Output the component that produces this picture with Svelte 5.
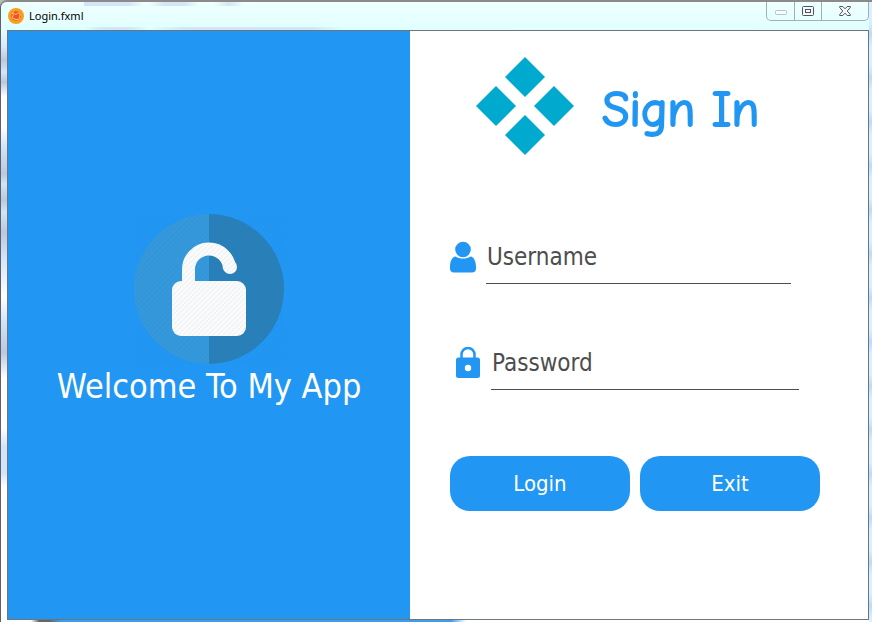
<script>
  let username = $state('');
  let password = $state('');
</script>

<div class="window">
  <header>
    <svg class="app-icon" viewBox="0 0 16 16" width="16" height="16" aria-hidden="true">
      <circle cx="8" cy="8" r="8" fill="#f9a01b" />
      <circle cx="8" cy="8" r="4.800" fill="#f4511e" />
      <path d="M4.500 5C6 4 7 7 8 6.500S10 4 11.500 5.500 11 8 11.500 9.500 9 12 8 11.500 4 11 4.500 9 6 8 4.500 5z" fill="none" stroke="#ffe0b0" stroke-width=".9" />
    </svg>
    <span class="title">Login.fxml</span>
    <div class="ghost" aria-hidden="true"></div>
    <div class="controls">
      <button class="small" aria-label="Minimize" disabled>
        <svg width="12" height="6" viewBox="0 0 12 6"><rect x=".5" y=".5" width="11" height="4" rx="1" fill="#f4ffff" stroke="#b7c3c5" /></svg>
      </button>
      <button class="small" aria-label="Maximize">
        <svg width="12" height="10" viewBox="0 0 12 10"><rect x=".5" y=".5" width="11" height="9" rx="1" fill="#f7f7f7" stroke="#4c5261" /><rect x="3.5" y="3.5" width="5" height="3" fill="#e9ffff" stroke="#4c5261" /></svg>
      </button>
      <button class="close" aria-label="Close">
        <svg width="12" height="10" viewBox="0 0 12 10"><path d="M.7.5h3.1L6 2.8 8.2.5h3.1v1L8.2 5l3.1 3.5v1H8.2L6 7.2 3.8 9.5H.7v-1L3.8 5 .7 1.5z" fill="#f7f7f7" stroke="#4c5261" /></svg>
      </button>
    </div>
  </header>

  <main>
    <section class="welcome">
      <svg class="badge" viewBox="0 0 150 150" width="150" height="150" aria-hidden="true">
        <defs>
          <pattern id="hatch" width="5" height="5" patternUnits="userSpaceOnUse">
            <path d="M-1 6L6-1M-1 1L1-1M4 6L6 4" stroke="#1769ad" stroke-opacity=".07" />
          </pattern>
        </defs>
        <path d="M75 0a75 75 0 0 0 0 150z" fill="#3498db" />
        <path d="M75 0a75 75 0 0 1 0 150z" fill="#2980b9" />
        <path d="M54.500 72V55a20.500 20.500 0 0 1 41-1" fill="none" stroke="#fafafa" stroke-width="13" transform="translate(0 1)" />
        <circle cx="96" cy="53" r="7" fill="#fafafa" />
        <rect x="38" y="67" width="74" height="55" rx="9" fill="#fafafa" />
        <rect x="2" y="2" width="147" height="147" fill="url(#hatch)" />
      </svg>
      <p>Welcome To My App</p>
    </section>

    <section class="signin">
      <div class="brand">
        <svg viewBox="0 0 98 98" width="98" height="98" fill="#00a9ce" aria-hidden="true">
          <path d="M49 0l20 20-20 20-20-20zM20 29l20 20-20 20L0 49zM78 29l20 20-20 20-20-20zM49 58l20 20-20 20-20-20z" />
        </svg>
        <h1>Sign In</h1>
      </div>

      <form onsubmit={(e) => e.preventDefault()}>
        <div class="field">
          <label for="username" aria-label="Username">
            <svg viewBox="0 0 26 32" width="26" height="32" fill="#2196f3" aria-hidden="true">
              <circle cx="13" cy="8.500" r="7.800" />
              <path d="M5.500 15.500C8 17 10 17.500 13 17.500s5-.5 7.500-2C24 16 26 20.500 26 26v1.500c0 2.500-1.500 4-4 4H4c-2.500 0-4-1.500-4-4V26c0-5.500 2-10 5.500-10.500z" />
            </svg>
          </label>
          <input id="username" type="text" placeholder="Username" bind:value={username} />
        </div>
        <div class="field password">
          <label for="password" aria-label="Password">
            <svg viewBox="0 0 26 32" width="26" height="32" aria-hidden="true">
              <path d="M7.500 13V7.500a6.500 6.500 0 0 1 13 0V13" fill="none" stroke="#2196f3" stroke-width="2.500" />
              <path fill="#2196f3" fill-rule="evenodd" d="M4.500 10.500h19a2.500 2.500 0 0 1 2.500 2.500V28.500a2.500 2.500 0 0 1-2.500 2.500H4.500a2.500 2.500 0 0 1-2.500-2.500V13a2.500 2.500 0 0 1 2.500-2.500zM14 17.800a3.200 3.200 0 1 0 0 6.400 3.200 3.200 0 0 0 0-6.400z" />
            </svg>
          </label>
          <input id="password" type="password" placeholder="Password" bind:value={password} />
        </div>
        <div class="actions">
          <button type="submit">Login</button>
          <button type="button">Exit</button>
        </div>
      </form>
    </section>
  </main>
</div>

<style>
  :global(body) {
    margin: 0;
    background: #b9b9b6;
  }
  .window, .window * {
    box-sizing: border-box;
  }
  .window {
    display: flex;
    flex-direction: column;
    min-height: 100vh;
    padding: 0 3px 2px 6px;
    border-top: 2px solid #8a8a88;
    border-left: 1px solid #625f67;
    border-radius: 7px 0 0 0;
    background:
      linear-gradient(90deg, transparent 30px, #666 38px, #666 48px, #3e9eed 60px, #3e9eed 450px, transparent 465px) bottom / 100% 2px no-repeat,
      repeating-linear-gradient(#d9f0ff 0 20px, #bcdcf8 32px, #d9f0ff 44px) right / 3px 100% no-repeat,
      linear-gradient(#e5ffff 0, #e5ffff 28px, #d4e8fc 45px, #b9c9e0 58px, #d4e6fb 70px, #b9c9e0 80px, #fff 95px, #fff 125px, #d0e4fa 145px, #b9c9e0 172px, #d0e4fa 182px, #b9c9e0 198px, #d0e4fa 210px, #b9c9e0 230px, #d0e4fa 255px, #fff 295px, #d0e4fa 320px, #b9c9e0 350px, #fff 376px, #fff 425px, #d0e4fa 445px, #d0e4fa 470px, #fff 485px);
    font-family: "DejaVu Sans Condensed", "DejaVu Sans", sans-serif;
    font-stretch: condensed;
  }
  header {
    display: flex;
    align-items: flex-start;
    height: 28px;
    background: linear-gradient(#f0ffff, #e0ffff);
  }
  .app-icon {
    margin: 6px 5px 0 1px;
  }
  .title {
    margin-top: 6px;
    color: #000;
    font-family: "Noto Sans", sans-serif;
    font-size: 11px;
    line-height: 16px;
  }
  .ghost {
    flex: 1;
    height: 28px;
    background:
      linear-gradient(90deg, #d5e5f5 45px, transparent 60px, transparent 65px, #d5e5f5 80px, #d5e5f5 100px, transparent 115px, transparent 130px, #d5e5f5 145px, transparent 160px) top / 100% 4px no-repeat,
      linear-gradient(90deg, transparent, #d5e5f5 20px, #d5e5f5 45px, transparent 65px, #d5e5f5 100px, #d5e5f5 230px, transparent 260px) bottom / 100% 3px no-repeat;
  }
  .controls {
    display: flex;
    height: 19px;
    border: 1px solid #a2b0b3;
    border-top: 0;
    border-radius: 0 0 5px 5px;
  }
  .controls button {
    display: flex;
    align-items: center;
    justify-content: center;
    width: 27px;
    padding: 0;
    border: 0;
    background: transparent;
  }
  .controls .small {
    border-right: 1px solid #a2b0b3;
  }
  .controls .small:first-child {
    width: 28px;
    padding-top: 4px;
  }
  .controls .close {
    width: 46px;
  }
  main {
    display: grid;
    flex: 1;
    grid-template-columns: 402fr 458fr;
    border: 1px solid #6d757d;
    background: #fff;
  }
  .welcome {
    display: flex;
    flex-direction: column;
    align-items: center;
    padding-top: 183px;
    background: #2196f3;
  }
  .welcome p {
    margin: 0;
    color: #fff;
    font-size: 34px;
    line-height: 44px;
    white-space: nowrap;
  }
  .signin {
    padding: 26px 40px 0;
  }
  .brand {
    display: flex;
    align-items: center;
    gap: 28px;
    padding-left: 26px;
  }
  h1 {
    margin: 0;
    padding-top: 8px;
    color: #2196f3;
    font-family: "Comic Sans MS", "Comic Neue", "Noto Sans", cursive;
    font-size: 50px;
    font-weight: 500;
    line-height: 56px;
    white-space: nowrap;
    -webkit-text-stroke: 2px #2196f3;
  }
  form {
    margin-top: 76px;
  }
  .field {
    display: flex;
    gap: 10px;
    align-items: flex-start;
    width: 341px;
    height: 53px;
  }
  .field.password {
    width: 345px;
    margin: 53px 0 0 4px;
  }
  label {
    display: flex;
    padding-top: 10px;
  }
  .password label {
    padding-right: 1px;
  }
  input {
    flex: 1;
    min-width: 0;
    height: 53px;
    padding: 0 1px;
    border: 0;
    border-bottom: 1px solid #4d4d4d;
    outline: 0;
    background: transparent;
    color: #4d4d4d;
    font-family: inherit;
    font-stretch: inherit;
    font-size: 24px;
  }
  input::placeholder {
    color: #4d4d4d;
    opacity: 1;
  }
  .actions {
    display: flex;
    gap: 10px;
    margin-top: 66px;
  }
  .actions button {
    width: 180px;
    height: 55px;
    padding: 0;
    border: 0;
    border-radius: 20px;
    background: #2196f3;
    color: #fff;
    font-family: inherit;
    font-stretch: inherit;
    font-size: 22px;
  }
</style>
